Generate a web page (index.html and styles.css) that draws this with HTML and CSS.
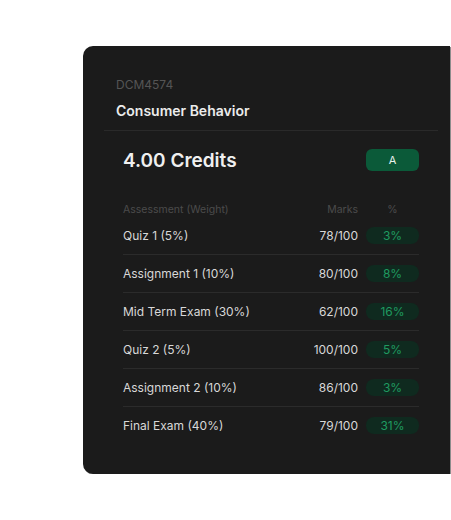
FILE: index.html
```html
<!DOCTYPE html>
<html>
<head>
<meta charset="utf-8">
<link rel="stylesheet" href="styles.css">
</head>
<body>
<div class="card">
  <div class="head">
    <div class="code">DCM4574</div>
    <div class="title">Consumer Behavior</div>
  </div>
  <div class="sep"></div>
  <div class="body">
    <div class="credits-row">
      <div class="credits">4.00 Credits</div>
      <div class="grade">A</div>
    </div>
    <div class="thead">
      <span class="name">Assessment (Weight)</span>
      <span class="marks">Marks</span>
      <span class="pct">%</span>
    </div>
    <div class="row"><span class="name">Quiz 1 (5%)</span><span class="marks">78/100</span><span class="pct pill">3%</span></div>
    <div class="row"><span class="name">Assignment 1 (10%)</span><span class="marks">80/100</span><span class="pct pill">8%</span></div>
    <div class="row"><span class="name">Mid Term Exam (30%)</span><span class="marks">62/100</span><span class="pct pill">16%</span></div>
    <div class="row"><span class="name">Quiz 2 (5%)</span><span class="marks">100/100</span><span class="pct pill">5%</span></div>
    <div class="row"><span class="name">Assignment 2 (10%)</span><span class="marks">86/100</span><span class="pct pill">3%</span></div>
    <div class="row last"><span class="name">Final Exam (40%)</span><span class="marks">79/100</span><span class="pct pill">31%</span></div>
  </div>
</div>
</body>
</html>
```
FILE: styles.css
```css
html, body {
  margin: 0;
  padding: 0;
  background: #ffffff;
  overflow: hidden;
}
body {
  font-family: Inter, "Noto Sans", sans-serif;
}
.card {
  margin: 46px 0 0 83px;
  width: 367px;
  height: 428px;
  box-sizing: border-box;
  background: #1b1b1b;
  border-radius: 10px 0 0 10px;
  box-shadow: 1px 1px 0 #8c8c8c;
}
.head {
  padding: 32px 0 0 33px;
}
.code {
  font-size: 12px;
  line-height: 14px;
  color: #555555;
}
.title {
  margin-top: 10px;
  font-size: 14px;
  line-height: 18px;
  font-weight: 600;
  color: #ececec;
}
.sep {
  height: 1px;
  background: #2a2a2a;
  margin: 10px 12px 0 21px;
}
.body {
  padding: 0 31px 0 40px;
}
.credits-row {
  margin-top: 18px;
  display: flex;
  align-items: center;
  justify-content: space-between;
  height: 22px;
}
.credits {
  font-size: 19px;
  font-weight: 600;
  color: #f0f0f0;
}
.grade {
  width: 53px;
  height: 22px;
  border-radius: 6px;
  background: #0b5a39;
  color: #e8f2ec;
  font-size: 11px;
  display: flex;
  align-items: center;
  justify-content: center;
}
.thead, .row {
  display: flex;
  align-items: center;
}
.thead {
  margin-top: 31px;
  height: 15px;
  font-size: 10.5px;
  color: #4b4b4b;
}
.name {
  flex: 1;
}
.marks {
  text-align: right;
  margin-right: 8px;
}
.pct {
  width: 53px;
  text-align: center;
}
.row {
  height: 37px;
  border-bottom: 1px solid #2b2b2b;
  font-size: 12px;
  color: #d8d8d8;
}
.row.last {
  border-bottom: none;
}
.pill {
  height: 17px;
  line-height: 17px;
  border-radius: 8px;
  background: #0f2a1f;
  color: #1f9a60;
}
```
